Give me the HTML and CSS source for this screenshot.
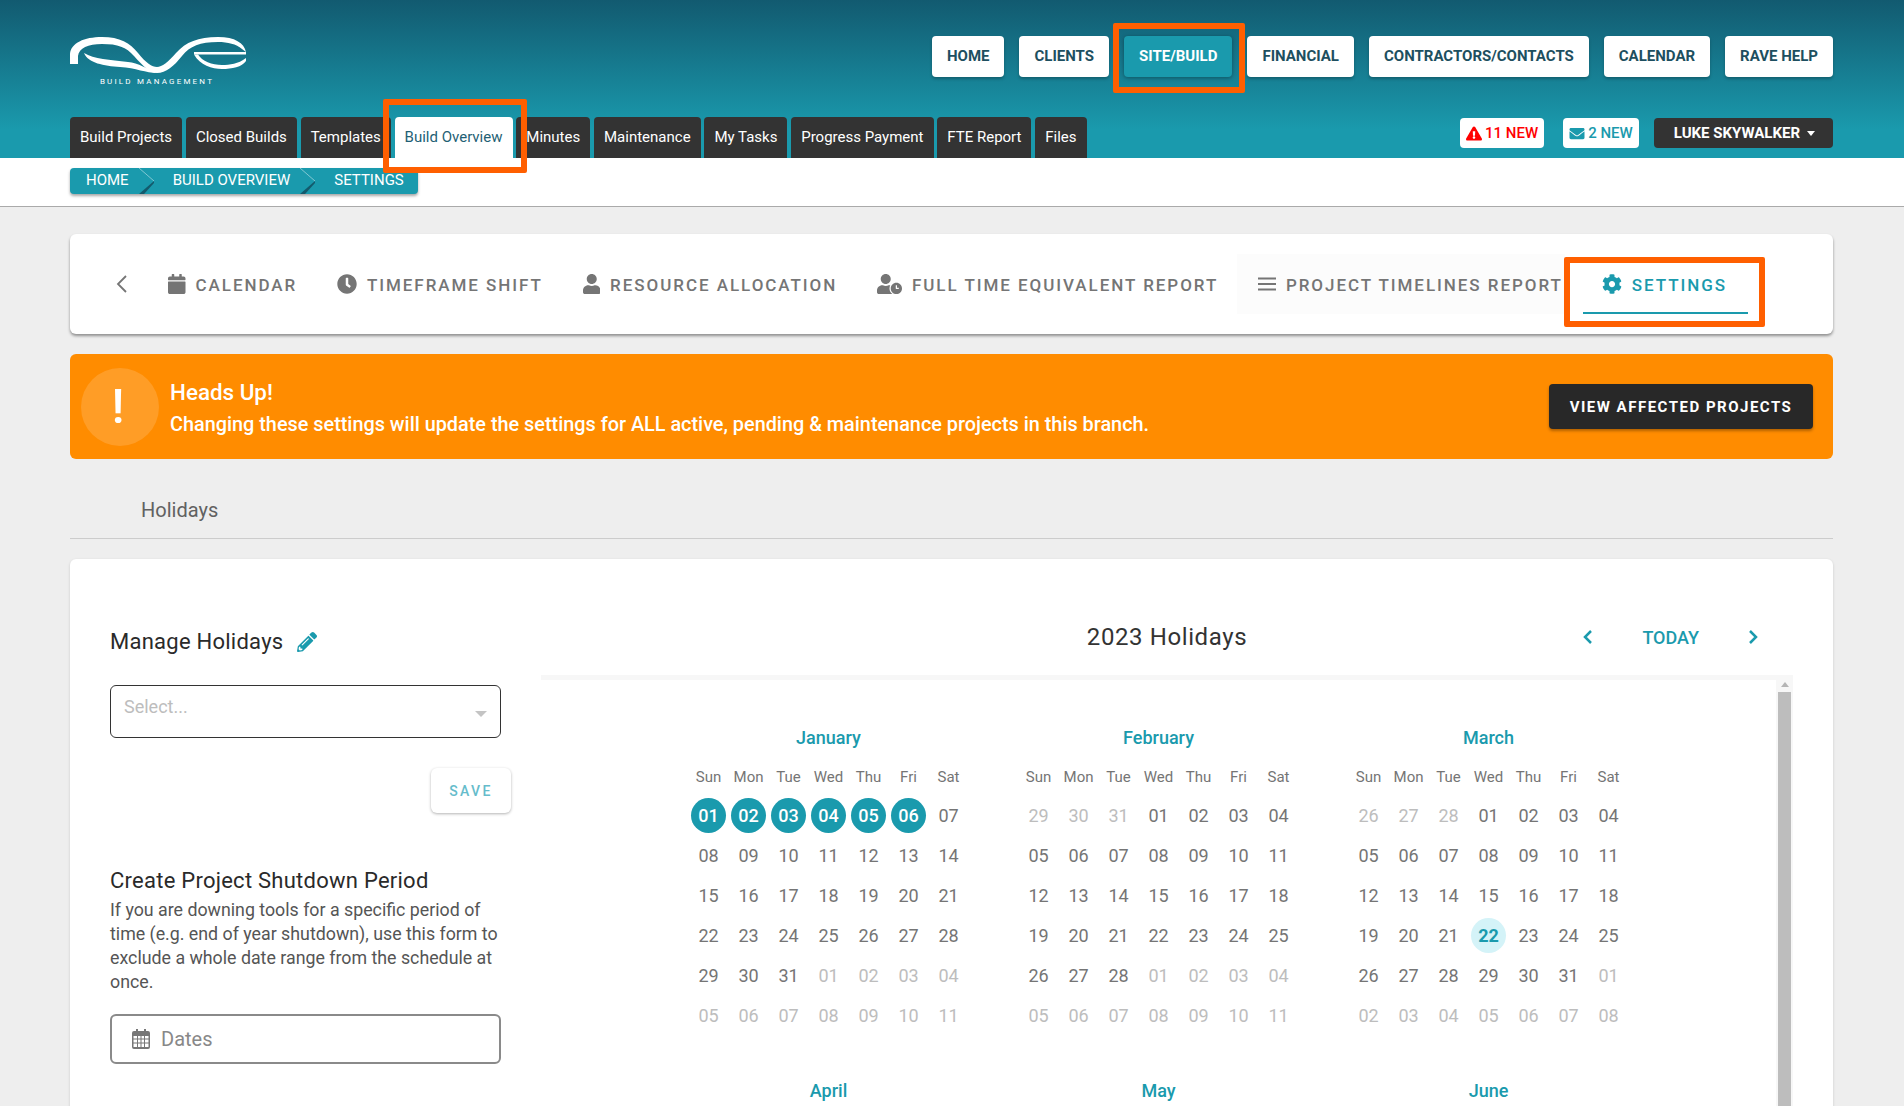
FILE: index.html
```html
<!DOCTYPE html>
<html lang="en">
<head>
<meta charset="utf-8">
<title>Rave Build Management – Settings</title>
<link rel="stylesheet" href="styles.css">
</head>
<body>
<header class="header">
  <div class="header-top">
    <div class="logo">
      <svg class="logo-mark" viewBox="0 0 176 36" aria-hidden="true">
        <path d="M0 27 V17 C1 6 14 0 32 0 C50 0 60 6 68 16 C76 26 82 30 87 30 C92 30 98 25 106 16 C116 5 128 0 148 0 C165 0 174 6 176 15 L172 12 C166 7 158 5 148 5 C130 5 120 9 112 19 C104 29 96 36 87 36 C80 36 74 30 64 19 C56 10 48 7 32 7 C18 7 9 11 8 19 V27 Z"/>
        <path d="M14 16 C24 22 40 23 58 25 C68 26 78 32 87 36 C76 36 66 31 50 30 C34 29 18 26 14 16Z"/>
        <path d="M124 15 H176 V17.500 H124Z"/>
        <path d="M124 17.500 C130 28 142 32 152 32 C162 32 172 30 176 24 L176 21 C168 27 160 28 152 28 C142 28 132 24 128 17.500Z"/>
      </svg>
      <span class="logo-text">BUILD MANAGEMENT</span>
    </div>
    <nav class="main-nav">
      <a class="nav-btn">HOME</a>
      <a class="nav-btn">CLIENTS</a>
      <a class="nav-btn nav-active">SITE/BUILD</a>
      <a class="nav-btn">FINANCIAL</a>
      <a class="nav-btn">CONTRACTORS/CONTACTS</a>
      <a class="nav-btn">CALENDAR</a>
      <a class="nav-btn">RAVE HELP</a>
    </nav>
  </div>
  <div class="header-bottom">
    <div class="sub-tabs">
      <a class="sub-tab">Build Projects</a>
      <a class="sub-tab">Closed Builds</a>
      <a class="sub-tab">Templates</a>
      <a class="sub-tab sub-active">Build Overview</a>
      <a class="sub-tab">Minutes</a>
      <a class="sub-tab">Maintenance</a>
      <a class="sub-tab">My Tasks</a>
      <a class="sub-tab">Progress Payment</a>
      <a class="sub-tab">FTE Report</a>
      <a class="sub-tab">Files</a>
    </div>
    <div class="user-tools">
      <a class="pill pill-alert"><svg class="pill-icon" viewBox="0 0 576 512"><path d="M569.517 440.013C587.975 472.007 564.806 512 527.94 512H48.054c-36.937 0-59.999-40.055-41.577-71.987L246.423 23.985c18.467-32.009 64.72-31.951 83.154 0l239.94 416.028zM288 354c-25.405 0-46 20.595-46 46s20.595 46 46 46 46-20.595 46-46-20.595-46-46-46zm-43.673-165.346l7.418 136c.347 6.364 5.609 11.346 11.982 11.346h48.546c6.373 0 11.635-4.982 11.982-11.346l7.418-136c.375-6.874-5.098-12.654-11.982-12.654h-63.383c-6.884 0-12.356 5.78-11.981 12.654z"/></svg>11 NEW</a>
      <a class="pill pill-mail"><svg class="pill-icon" viewBox="0 0 512 512"><path d="M502.3 190.8c3.9-3.1 9.7-.2 9.7 4.7V400c0 26.5-21.5 48-48 48H48c-26.5 0-48-21.5-48-48V195.6c0-5 5.7-7.8 9.7-4.7 22.4 17.4 52.1 39.5 154.1 113.6 21.1 15.4 56.7 47.8 92.2 47.6 35.7.3 72-32.8 92.3-47.6 102-74.1 131.6-96.3 154-113.7zM256 320c23.2.4 56.6-29.2 73.4-41.4 132.7-96.3 142.8-104.7 173.4-128.7 5.8-4.5 9.2-11.500 9.2-18.900v-19c0-26.5-21.5-48-48-48H48C21.5 64 0 85.5 0 112v19c0 7.4 3.4 14.300 9.2 18.900 30.600 23.900 40.700 32.400 173.400 128.700 16.800 12.200 50.200 41.800 73.400 41.400z"/></svg>2 NEW</a>
      <a class="user-btn">LUKE SKYWALKER<span class="caret"></span></a>
    </div>
  </div>
</header>

<div class="crumb-band">
  <div class="crumbs">
    <span>HOME</span>
    <svg class="crumb-sep" viewBox="0 0 15 26"><path class="sep-dark" d="M15 13 L0 26 H5 L15 15Z"/><path class="sep-light" d="M0 0 L15 13"/></svg>
    <span>BUILD OVERVIEW</span>
    <svg class="crumb-sep" viewBox="0 0 15 26"><path class="sep-dark" d="M15 13 L0 26 H5 L15 15Z"/><path class="sep-light" d="M0 0 L15 13"/></svg>
    <span>SETTINGS</span>
  </div>
</div>

<main class="main">
  <section class="tool-card">
    <svg class="tool-back" viewBox="0 0 12 18"><path d="M10 1 L2 9 L10 17"/></svg>
    <a class="tool tool-calendar"><svg class="tool-icon" viewBox="0 0 448 512"><path d="M12 192h424c6.600 0 12 5.400 12 12v260c0 26.500-21.500 48-48 48H48c-26.500 0-48-21.500-48-48V204c0-6.600 5.400-12 12-12zm436-44v-36c0-26.500-21.500-48-48-48h-48V12c0-6.600-5.400-12-12-12h-40c-6.600 0-12 5.400-12 12v52H160V12c0-6.600-5.400-12-12-12h-40c-6.600 0-12 5.400-12 12v52H48C21.500 64 0 85.500 0 112v36c0 6.600 5.400 12 12 12h424c6.600 0 12-5.400 12-12z"/></svg>CALENDAR</a>
    <a class="tool"><svg class="tool-icon" viewBox="0 0 512 512"><path d="M256,8C119,8,8,119,8,256S119,504,256,504,504,393,504,256,393,8,256,8Zm92.490,313h0l-20,25a16,16,0,0,1-22.490,2.500h0l-67-49.720a40,40,0,0,1-15-31.230V112a16,16,0,0,1,16-16h32a16,16,0,0,1,16,16V256l58,42.500A16,16,0,0,1,348.490,321Z"/></svg>TIMEFRAME SHIFT</a>
    <a class="tool"><svg class="tool-icon" viewBox="0 0 448 512"><path d="M224 256c70.700 0 128-57.300 128-128S294.700 0 224 0 96 57.300 96 128s57.300 128 128 128zm89.600 32h-16.700c-22.200 10.200-46.900 16-72.900 16s-50.600-5.800-72.900-16h-16.700C60.200 288 0 348.200 0 422.400V464c0 26.500 21.500 48 48 48h352c26.500 0 48-21.500 48-48v-41.600c0-74.200-60.200-134.400-134.400-134.400z"/></svg>RESOURCE ALLOCATION</a>
    <a class="tool"><svg class="tool-icon" viewBox="0 0 640 512"><path d="M496 224c-79.600 0-144 64.400-144 144s64.400 144 144 144 144-64.400 144-144-64.400-144-144-144zm64 150.300c0 5.300-4.400 9.700-9.700 9.700h-60.600c-5.300 0-9.700-4.400-9.700-9.700v-76.600c0-5.300 4.400-9.700 9.700-9.700h12.600c5.300 0 9.700 4.400 9.700 9.700V352h38.300c5.300 0 9.700 4.400 9.700 9.700v12.600zM320 368c0-27.800 6.700-54.100 18.200-77.500-8-1.500-16.200-2.500-24.600-2.500h-16.700c-22.200 10.200-46.900 16-72.900 16s-50.600-5.800-72.900-16h-16.700C60.200 288 0 348.200 0 422.400V464c0 26.500 21.500 48 48 48h347.100c-45.300-31.900-75.100-84.500-75.100-144zm-96-112c70.700 0 128-57.300 128-128S294.700 0 224 0 96 57.300 96 128s57.300 128 128 128z"/></svg>FULL TIME EQUIVALENT REPORT</a>
    <a class="tool tool-hover"><svg class="tool-icon tool-bars" viewBox="0 0 18 14"><path d="M0 1.500H18M0 7H18M0 12.500H18"/></svg>PROJECT TIMELINES REPORT</a>
    <a class="tool tool-active"><svg class="tool-icon" viewBox="0 0 512 512"><path d="M487.400 315.700l-42.600-24.600c4.300-23.200 4.300-47 0-70.200l42.600-24.600c4.900-2.800 7.100-8.600 5.500-14-11.100-35.600-30-67.800-54.700-94.600-3.800-4.100-10-5.100-14.800-2.300L380.800 110c-17.900-15.400-38.500-27.300-60.800-35.100V25.800c0-5.600-3.900-10.500-9.400-11.700-36.700-8.200-74.300-7.800-109.200 0-5.500 1.200-9.400 6.100-9.400 11.700V75c-22.200 7.900-42.800 19.800-60.800 35.100L88.700 85.500c-4.900-2.800-11-1.900-14.800 2.300-24.700 26.700-43.600 58.900-54.700 94.600-1.700 5.400.6 11.200 5.500 14L67.300 221c-4.300 23.200-4.300 47 0 70.200l-42.600 24.600c-4.900 2.800-7.100 8.600-5.500 14 11.100 35.600 30 67.800 54.700 94.600 3.800 4.100 10 5.100 14.800 2.300l42.600-24.600c17.900 15.400 38.500 27.300 60.800 35.100v49.200c0 5.600 3.900 10.500 9.400 11.700 36.700 8.200 74.300 7.800 109.200 0 5.500-1.200 9.400-6.100 9.400-11.700v-49.200c22.200-7.900 42.800-19.800 60.800-35.100l42.600 24.600c4.900 2.800 11 1.900 14.800-2.300 24.700-26.700 43.600-58.900 54.700-94.600 1.500-5.500-.7-11.300-5.600-14.100zM256 336c-44.100 0-80-35.900-80-80s35.900-80 80-80 80 35.900 80 80-35.900 80-80 80z"/></svg>SETTINGS</a>
  </section>

  <section class="banner">
    <div class="banner-badge">!</div>
    <div class="banner-copy">
      <div class="banner-title">Heads Up!</div>
      <div class="banner-text">Changing these settings will update the settings for ALL active, pending &amp; maintenance projects in this branch.</div>
    </div>
    <a class="banner-btn">VIEW AFFECTED PROJECTS</a>
  </section>

  <div class="section-tabs"><span class="section-tab">Holidays</span></div>

  <section class="holiday-card">
    <aside class="side">
      <h2 class="side-head">Manage Holidays
        <svg class="pencil" viewBox="0 0 512 512"><path d="M497.900 142.100l-46.100 46.100c-4.700 4.700-12.300 4.700-17 0l-111-111c-4.700-4.700-4.700-12.300 0-17l46.100-46.100c18.700-18.700 49.100-18.700 67.900 0l60.100 60.100c18.800 18.700 18.800 49.100 0 67.900zM284.200 99.800L21.600 362.400.4 483.900c-2.900 16.400 11.400 30.600 27.800 27.800l121.500-21.300 262.600-262.600c4.700-4.700 4.700-12.300 0-17l-111-111c-4.800-4.700-12.400-4.700-17.100 0zM124.100 339.900c-5.500-5.500-5.500-14.300 0-19.800l154-154c5.500-5.500 14.300-5.500 19.800 0s5.500 14.300 0 19.800l-154 154c-5.500 5.500-14.300 5.500-19.800 0zM88 424h48v36.300l-64.500 11.300-31.100-31.100L51.700 376H88v48z"/></svg>
      </h2>
      <div class="select-box"><span class="select-text">Select...</span><span class="select-caret"></span></div>
      <a class="save-btn">SAVE</a>
      <h2 class="side-head side-head-2">Create Project Shutdown Period</h2>
      <p class="side-copy">If you are downing tools for a specific period of time (e.g. end of year shutdown), use this form to exclude a whole date range from the schedule at once.</p>
      <div class="date-box">
        <svg class="date-icon" viewBox="0 0 18 20"><path d="M4 0h2v2h6V0h2v2h2a2 2 0 0 1 2 2v14a2 2 0 0 1-2 2H2a2 2 0 0 1-2-2V4a2 2 0 0 1 2-2h2zM1.500 7v2.500h3.500V7zm4.500 0v2.500h2.500V7zm3.500 0v2.500h2.500V7zm3.500 0v2.500h3.500V7zM1.500 10.500v3h3.500v-3zm4.500 0v3h2.500v-3zm3.500 0v3h2.500v-3zm3.500 0v3h3.500v-3zM1.500 14.500v3.500h3.500v-3.500zm4.500 0v3.500h2.500v-3.500zm3.500 0v3.500h2.500v-3.500zm3.500 0v3.500h3.500v-3.500z"/></svg>
        <span>Dates</span>
      </div>
    </aside>

    <div class="year">
      <div class="year-head">
        <span></span>
        <h1 class="year-title">2023 Holidays</h1>
        <div class="year-nav">
          <svg class="year-chev" viewBox="0 0 11 16"><path d="M9 2 L3 8 L9 14"/></svg>
          <a class="year-today">TODAY</a>
          <svg class="year-chev" viewBox="0 0 11 16"><path d="M2 2 L8 8 L2 14"/></svg>
        </div>
      </div>
      <div class="year-body">
        <div class="months">
          <div class="month">
            <div class="month-name">January</div>
            <div class="dow"><span>Sun</span><span>Mon</span><span>Tue</span><span>Wed</span><span>Thu</span><span>Fri</span><span>Sat</span></div>
            <div class="days">
              <span class="sel">01</span><span class="sel">02</span><span class="sel">03</span><span class="sel">04</span><span class="sel">05</span><span class="sel">06</span><span>07</span>
              <span>08</span><span>09</span><span>10</span><span>11</span><span>12</span><span>13</span><span>14</span>
              <span>15</span><span>16</span><span>17</span><span>18</span><span>19</span><span>20</span><span>21</span>
              <span>22</span><span>23</span><span>24</span><span>25</span><span>26</span><span>27</span><span>28</span>
              <span>29</span><span>30</span><span>31</span><span class="off">01</span><span class="off">02</span><span class="off">03</span><span class="off">04</span>
              <span class="off">05</span><span class="off">06</span><span class="off">07</span><span class="off">08</span><span class="off">09</span><span class="off">10</span><span class="off">11</span>
            </div>
          </div>
          <div class="month">
            <div class="month-name">February</div>
            <div class="dow"><span>Sun</span><span>Mon</span><span>Tue</span><span>Wed</span><span>Thu</span><span>Fri</span><span>Sat</span></div>
            <div class="days">
              <span class="off">29</span><span class="off">30</span><span class="off">31</span><span>01</span><span>02</span><span>03</span><span>04</span>
              <span>05</span><span>06</span><span>07</span><span>08</span><span>09</span><span>10</span><span>11</span>
              <span>12</span><span>13</span><span>14</span><span>15</span><span>16</span><span>17</span><span>18</span>
              <span>19</span><span>20</span><span>21</span><span>22</span><span>23</span><span>24</span><span>25</span>
              <span>26</span><span>27</span><span>28</span><span class="off">01</span><span class="off">02</span><span class="off">03</span><span class="off">04</span>
              <span class="off">05</span><span class="off">06</span><span class="off">07</span><span class="off">08</span><span class="off">09</span><span class="off">10</span><span class="off">11</span>
            </div>
          </div>
          <div class="month">
            <div class="month-name">March</div>
            <div class="dow"><span>Sun</span><span>Mon</span><span>Tue</span><span>Wed</span><span>Thu</span><span>Fri</span><span>Sat</span></div>
            <div class="days">
              <span class="off">26</span><span class="off">27</span><span class="off">28</span><span>01</span><span>02</span><span>03</span><span>04</span>
              <span>05</span><span>06</span><span>07</span><span>08</span><span>09</span><span>10</span><span>11</span>
              <span>12</span><span>13</span><span>14</span><span>15</span><span>16</span><span>17</span><span>18</span>
              <span>19</span><span>20</span><span>21</span><span class="today">22</span><span>23</span><span>24</span><span>25</span>
              <span>26</span><span>27</span><span>28</span><span>29</span><span>30</span><span>31</span><span class="off">01</span>
              <span class="off">02</span><span class="off">03</span><span class="off">04</span><span class="off">05</span><span class="off">06</span><span class="off">07</span><span class="off">08</span>
            </div>
          </div>
          <div class="month"><div class="month-name">April</div></div>
          <div class="month"><div class="month-name">May</div></div>
          <div class="month"><div class="month-name">June</div></div>
        </div>
        <div class="scrollbar"><span class="scroll-up"></span><span class="scroll-thumb"></span></div>
      </div>
    </div>
  </section>
</main>

<div class="mark mark-nav"></div>
<div class="mark mark-sub"></div>
<div class="mark mark-tool"></div>
</body>
</html>
```
FILE: styles.css
```css
* { box-sizing: border-box; }
html, body { margin: 0; height: 100%; overflow: hidden; }
body {
  position: relative;
  height: 1106px;
  background: #eeeeee;
  font-family: Roboto, "Liberation Sans", sans-serif;
  color: #333;
}
a { display: block; }
h1, h2, p { margin: 0; font-weight: 400; }

/* Header */
.header {
  height: 158px;
  padding: 36px 71px 0 70px;
  background: linear-gradient(180deg, #125a70 0%, #1a9aad 82%, #1a9aad 100%);
  display: flex;
  flex-direction: column;
}
.header-top { height: 81px; display: flex; justify-content: space-between; align-items: flex-start; }
.logo { width: 176px; display: flex; flex-direction: column; align-items: center; }
.logo-mark { width: 176px; height: 36px; display: block; margin-top: 1px; overflow: visible; fill: #fff; }
.logo-text { margin-top: 4px; font-size: 8px; line-height: 9px; letter-spacing: 2.200px; color: #fff; white-space: nowrap; transform: translateX(-1px); }
.main-nav { display: flex; gap: 15px; }
.nav-btn {
  height: 41px;
  padding: 0 15px;
  line-height: 41px;
  background: #fff;
  border-radius: 4px;
  font-size: 15px;
  font-weight: 700;
  color: #1d4f60;
  box-shadow: 0 2px 3px rgba(0, 0, 0, .25);
}
.nav-active { background: #1a9aad; color: #fff; box-shadow: 0 1px 4px rgba(0, 0, 0, .35); }
.header-bottom { height: 41px; display: flex; justify-content: space-between; }
.sub-tabs { display: flex; gap: 3.800px; }
.sub-tab {
  padding: 0 10px;
  line-height: 41px;
  background: #333;
  color: #fff;
  font-size: 15px;
  border-radius: 4px 4px 0 0;
}
.sub-active { background: #fff; color: #1f5f75; }
.user-tools { display: flex; gap: 19px; height: 30px; margin-top: 1px; }
.pill {
  display: flex;
  align-items: center;
  padding: 0 6px;
  background: #fff;
  border-radius: 4px;
  font-size: 15px;
  font-weight: 500;
}
.pill-icon { width: 16px; height: 15px; margin-right: 3px; fill: currentColor; }
.pill-alert { color: #f00; }
.pill-mail { color: #1a9aad; gap: 0; }
.user-btn {
  display: flex;
  align-items: center;
  margin-left: -4px;
  padding: 0 18px 0 20px;
  background: #333;
  color: #fff;
  border-radius: 4px;
  font-size: 15px;
  font-weight: 700;
}
.caret { margin-left: 7px; border-top: 5px solid #fff; border-left: 4px solid transparent; border-right: 4px solid transparent; }

/* Breadcrumbs */
.crumb-band { height: 49px; padding: 10px 0 0 70px; background: #fff; border-bottom: 1px solid #aaa; }
.crumbs {
  display: inline-flex;
  align-items: center;
  height: 26px;
  padding: 0 14px 2px 16px;
  background: #1a9aad;
  border-radius: 4px;
  color: #fff;
  font-size: 15px;
  font-weight: 400;
  box-shadow: 0 2px 3px rgba(0, 0, 0, .35);
}
.crumb-sep { width: 15px; height: 26px; margin: 2px 19px 0 10px; flex: none; }
.sep-light { fill: none; stroke: rgba(255, 255, 255, .45); stroke-width: 1; }
.sep-dark { fill: #135a6c; }

/* Main */
.main { padding: 27px 71px 0 70px; }
.tool-card {
  height: 100px;
  padding: 0 0 0 46px;
  display: flex;
  align-items: center;
  background: #fff;
  border-radius: 6px;
  box-shadow: 0 2px 3px rgba(0, 0, 0, .4);
}
.tool-back { width: 12px; height: 18px; flex: none; margin-right: 40px; fill: none; stroke: #757575; stroke-width: 1.800; }
.tool {
  display: flex;
  align-items: center;
  gap: 10px;
  margin-right: 39.700px;
  padding-top: 2px;
  font-size: 17px;
  font-weight: 500;
  letter-spacing: 1.950px;
  color: #757575;
  white-space: nowrap;
}
.tool-icon { height: 20px; width: auto; flex: none; fill: currentColor; margin-top: -2px; }
.tool-bars { width: 18px; height: 14px; fill: none; stroke: currentColor; stroke-width: 2; }
.tool-hover { align-self: center; height: 60px; margin: 0 0 0 -21px; padding: 2px 2px 0 21px; background: #fcfcfc; }
.tool-active {
  height: 60px;
  margin: 0 0 0 18px;
  padding: 4px 21px 0 19px;
  color: #1a9aad;
  border-bottom: 2px solid #1a9aad;
}

.banner {
  height: 105px;
  margin-top: 20px;
  padding: 0 20px 0 11px;
  display: flex;
  align-items: center;
  background: #ff8c00;
  border-radius: 6px;
  color: #fff;
}
.banner-badge {
  width: 78px;
  height: 78px;
  padding-right: 4px;
  border-radius: 50%;
  background: rgba(255, 255, 255, .15);
  font-size: 49px;
  font-weight: 500;
  line-height: 78px;
  text-align: center;
  flex: none;
}
.banner-copy { margin-left: 11px; flex: 1; padding-top: 3px; }
.banner-title { font-size: 22.400px; font-weight: 500; line-height: 28px; }
.banner-text { font-size: 19.850px; font-weight: 500; line-height: 28px; margin-top: 5px; }
.banner-btn {
  width: 264px;
  height: 45px;
  line-height: 47px;
  text-align: center;
  background: #282828;
  color: #fff;
  border-radius: 4px;
  font-size: 15px;
  font-weight: 700;
  letter-spacing: 1.500px;
  box-shadow: 0 2px 3px rgba(0, 0, 0, .3);
}

.section-tabs { height: 80px; padding: 0 0 0 71px; border-bottom: 1px solid #ccc; display: flex; align-items: center; }
.section-tab { font-size: 20px; color: #616161; margin-top: 22px; }

.holiday-card {
  margin-top: 20px;
  height: 700px;
  padding: 40px 40px 0;
  display: flex;
  gap: 40px;
  background: #fff;
  border-radius: 6px 6px 0 0;
  box-shadow: 0 1px 3px rgba(0, 0, 0, .15);
}
.side { width: 391px; flex: none; padding-top: 30px; display: flex; flex-direction: column; }
.side-head { font-size: 22px; font-weight: 400; line-height: 26px; color: #2a2a2a; letter-spacing: .25px; display: flex; align-items: center; gap: 14px; }
.side-head-2 { margin-top: 55px; }
.pencil { width: 20px; height: 20px; fill: #1a9aad; flex: none; }
.select-box {
  height: 53px;
  margin-top: 30px;
  border: 1px solid #333;
  border-radius: 6px;
  padding: 10px 12px 0 13px;
  display: flex;
  justify-content: space-between;
  font-size: 18px;
  color: #bdbdbd;
}
.select-caret { margin-top: 15px; margin-right: 1px; border-top: 6px solid #c4c4c4; border-left: 6px solid transparent; border-right: 6px solid transparent; height: 0; }
.save-btn {
  align-self: flex-end;
  width: 80px;
  height: 45px;
  margin: 30px -10px 0 0;
  line-height: 46px;
  text-align: center;
  border-radius: 6px;
  background: #fff;
  color: #66bccb;
  font-size: 14px;
  font-weight: 500;
  letter-spacing: 2.300px;
  box-shadow: 0 1px 3px rgba(0, 0, 0, .3);
}
.side-copy { margin-top: 4px; font-size: 17.800px; line-height: 24px; color: #555; }
.date-box {
  height: 50px;
  margin-top: 20px;
  border: 2px solid #8a8a8a;
  border-radius: 6px;
  padding-left: 20px;
  display: flex;
  align-items: center;
  gap: 11px;
  font-size: 20px;
  color: #888;
}
.date-icon { width: 18px; height: 20px; fill: #777; fill-rule: evenodd; }

.year { flex: 1; min-width: 0; display: flex; flex-direction: column; }
.year-head { height: 76px; display: grid; grid-template-columns: 1fr auto 1fr; align-items: center; flex: none; }
.year-title { font-size: 24px; font-weight: 400; color: #333; letter-spacing: .6px; }
.year-nav { justify-self: end; padding-right: 34px; display: flex; align-items: center; gap: 49px; }
.year-chev { width: 11px; height: 16px; fill: none; stroke: #1a9aad; stroke-width: 2.500; }
.year-today { font-size: 18px; font-weight: 500; color: #1a9aad; }
.year-body { flex: 1; display: flex; border-top: 5px solid #f7f7f7; min-height: 0; }
.months {
  flex: 1;
  padding: 46px 0 0 122.500px;
  display: grid;
  grid-template-columns: repeat(3, 330px);
  grid-auto-rows: max-content;
  row-gap: 44px;
}
.month { width: 280px; justify-self: center; text-align: center; }
.month-name { font-size: 18px; font-weight: 500; line-height: 24px; color: #1a9aad; }
.dow { display: grid; grid-template-columns: repeat(7, 40px); margin-top: 17px; font-size: 15px; line-height: 20px; color: #757575; }
.days { display: grid; grid-template-columns: repeat(7, 40px); grid-auto-rows: 40px; margin-top: 8px; font-size: 18px; color: #757575; }
.days span { width: 35px; height: 35px; margin: 2.500px; line-height: 35px; border-radius: 50%; }
.days .off { color: #bdbdbd; }
.days .sel { background: #1a9aad; color: #fff; font-weight: 500; }
.days .today { background: #d4f3f8; color: #1a9aad; font-weight: 700; }
.scrollbar { width: 17px; flex: none; background: #f7f7f7; display: flex; flex-direction: column; align-items: center; }
.scroll-up { margin: 2px 0 5px; height: 0; border-bottom: 5px solid #b5b5b5; border-left: 4px solid transparent; border-right: 4px solid transparent; flex: none; }
.scroll-thumb { width: 13px; flex: 1; background: #bdbdbd; }

/* Annotation boxes drawn over the screenshot */
.mark { position: absolute; border: 6px solid #ff5f00; border-radius: 2px; pointer-events: none; }
.mark-nav { left: 1113px; top: 23px; width: 132px; height: 70px; }
.mark-sub { left: 383px; top: 99px; width: 144px; height: 74px; }
.mark-tool { left: 1564px; top: 257px; width: 201px; height: 70px; }
```
